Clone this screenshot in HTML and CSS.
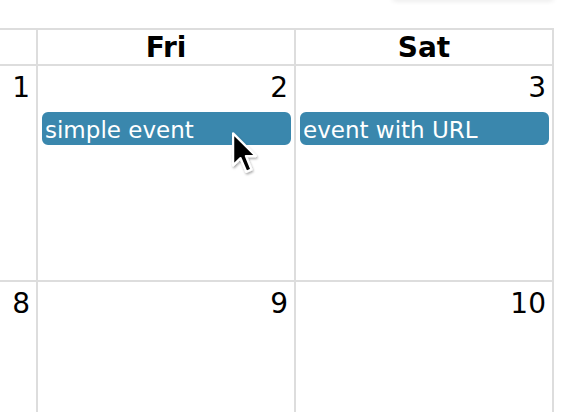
FILE: index.html
```html
<!DOCTYPE html>
<html lang="en">
<head>
    <meta charset="UTF-8">
    <title>Calendar</title>
    <link rel="stylesheet" href="styles.css">
</head>
<body>

<div class="toolbar">
    <div class="btn-group"></div>
</div>

<div class="calendar">
    <div class="head"></div>
    <div class="head">Fri</div>
    <div class="head">Sat</div>

    <div class="day">
        <div class="num">1</div>
    </div>
    <div class="day">
        <div class="num">2</div>
        <a class="event">simple event</a>
    </div>
    <div class="day">
        <div class="num">3</div>
        <a class="event">event with URL</a>
    </div>

    <div class="day">
        <div class="num">8</div>
    </div>
    <div class="day">
        <div class="num">9</div>
    </div>
    <div class="day">
        <div class="num">10</div>
    </div>
</div>

<!-- mouse pointer over the first event -->
<svg class="cursor" width="34" height="50" viewBox="-2 -2 16.5 24">
    <defs>
        <filter id="shade" x="-50%" y="-50%" width="200%" height="200%">
            <feDropShadow dx="0.4" dy="0.8" stdDeviation="0.6" flood-color="#000" flood-opacity="0.35"/>
        </filter>
    </defs>
    <path d="M0 0 L0 15.5 L3.6 12 L6.4 18.6 L8.9 17.5 L6.2 11 L11 11 Z"
          fill="#000" stroke="#fff" stroke-width="1.1" stroke-linejoin="round" filter="url(#shade)"/>
</svg>

</body>
</html>
```

FILE: styles.css
```css
body {
    margin: 0;
    padding: 0;
    position: relative;
    height: 412px;
    overflow: hidden;
    background: #fff;
    font-family: "DejaVu Sans", "Verdana", sans-serif;
    color: #000;
}

.toolbar {
    height: 28px;
    display: flex;
    justify-content: flex-end;
    padding-right: 16px;
}

.btn-group {
    width: 162px;
    height: 4px;
    margin-top: -4px;
    background: #fff;
    border-radius: 0 0 8px 8px;
    box-shadow: 0 1px 5px rgba(0, 0, 0, 0.1);
}

.calendar {
    display: grid;
    grid-template-columns: 36px 256px 256px;
    grid-template-rows: 34px 214px 130px;
    gap: 2px;
    width: fit-content;
    padding: 2px 2px 0 0;
    background: #ddd;
}

.head {
    background: #fff;
    font-weight: bold;
    font-size: 28px;
    line-height: 33px;
    padding-top: 1px;
    text-align: center;
}

.day {
    background: #fff;
    display: flex;
    flex-direction: column;
    padding: 6px 3px 0 4px;
}

.num {
    font-size: 28px;
    line-height: 32px;
    text-align: right;
    padding-right: 3px;
}

.event {
    display: block;
    margin-top: 8px;
    background: #3a87ad;
    border: 2px solid #3a87ad;
    border-radius: 6px;
    color: #fff;
    font-size: 23px;
    line-height: 26px;
    padding: 3px 1px 0;
    white-space: nowrap;
    overflow: hidden;
}

.cursor {
    position: absolute;
    left: 229px;
    top: 129px;
}
```
